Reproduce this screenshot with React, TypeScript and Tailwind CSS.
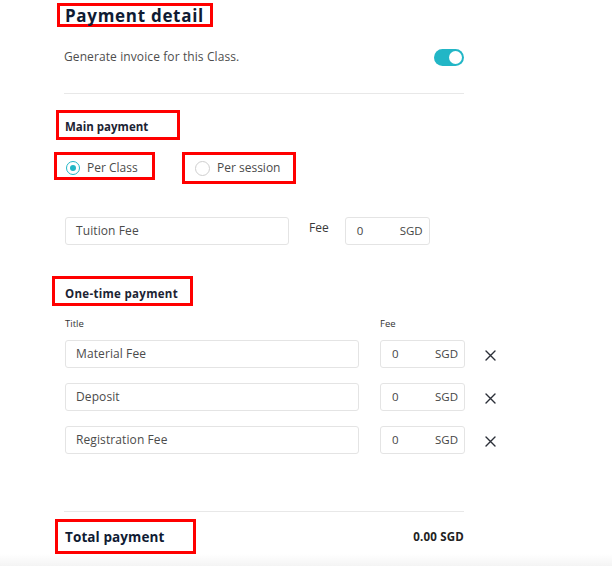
import { type FC } from "react";

// Payment detail form – one-off screen, annotated with red boxes

const RED = "border-[3px] border-[#ff0000]";

const XIcon: FC = () => (
  <svg width="11" height="11" viewBox="0 0 11 11" className="text-[#2b2f38]">
    <path d="M1 1 L10 10 M10 1 L1 10" stroke="currentColor" strokeWidth="1.4" strokeLinecap="round" />
  </svg>
);

const FeeBox: FC = () => (
  <div className="w-[85px] h-[28px] shrink-0 rounded-[3px] border border-[#e4e4e4] bg-white flex items-center justify-between pl-[11px] pr-[6px] text-[11.5px] text-[#444]">
    <span>0</span>
    <span>SGD</span>
  </div>
);

const TextBox: FC<{ value: string; w: string }> = ({ value, w }) => (
  <div className={`${w} h-[28px] shrink-0 rounded-[3px] border border-[#e4e4e4] bg-white flex items-center pl-[10px] text-[12px] text-[#4b4b4b] tracking-[0.1px]`}>
    {value}
  </div>
);

const rows = ["Material Fee", "Deposit", "Registration Fee"];

export default function App() {
  return (
    <div className="min-h-[566px] bg-white flex flex-col font-['Open_Sans',sans-serif] text-[#3c3c3c]">
      <div className="w-[400px] ml-[64px] flex flex-col">
        {/* Heading */}
        <div className={`mt-[3px] -ml-[7px] w-[156px] h-[24px] ${RED} flex items-center pl-[5px]`}>
          <h1 className="text-[17px] font-bold text-[#0f1b33] tracking-[0.7px] leading-none">Payment detail</h1>
        </div>

        {/* Invoice toggle */}
        <div className="mt-[21px] h-[18px] flex items-center justify-between">
          <span className="text-[12px] text-[#4e4e4e] tracking-[0.1px]">Generate invoice for this Class.</span>
          <div className="w-[30px] h-[17px] rounded-full bg-[#22b6c6] flex items-center justify-end pr-[2px]">
            <span className="w-[13px] h-[13px] rounded-full bg-white" />
          </div>
        </div>

        <div className="mt-[27px] h-px bg-[#e8e8e8]" />

        {/* Main payment */}
        <div className={`mt-[16px] -ml-[8px] w-[124px] h-[30px] ${RED} flex items-center pl-[6px] pt-[3px]`}>
          <h2 className="text-[11.5px] font-bold text-[#1c2333]">Main payment</h2>
        </div>

        <div className="mt-[12px] flex items-start gap-[27px] -ml-[10px]">
          <div className={`w-[101px] h-[28px] ${RED} flex items-center pl-[9px] pt-[3px] gap-[7px]`}>
            <span className="w-[14px] h-[14px] rounded-full border border-[#22b6c6] flex items-center justify-center">
              <span className="w-[6px] h-[6px] rounded-full bg-[#22b6c6]" />
            </span>
            <span className="text-[12px] text-[#4b4b4b]">Per Class</span>
          </div>
          <div className={`w-[114px] h-[32px] ${RED} flex items-center pl-[10px] gap-[7px]`}>
            <span className="w-[15px] h-[15px] rounded-full border border-[#cfcfcf]" />
            <span className="text-[12px] text-[#4b4b4b]">Per session</span>
          </div>
        </div>

        {/* Tuition */}
        <div className="mt-[33px] ml-[1px] flex items-start">
          <TextBox value="Tuition Fee" w="w-[224px]" />
          <span className="ml-[20px] mt-[2px] text-[12px] text-[#3a3a3a]">Fee</span>
          <div className="ml-[16px]">
            <FeeBox />
          </div>
        </div>

        {/* One-time payment */}
        <div className={`mt-[31px] -ml-[12px] w-[141px] h-[30px] ${RED} flex items-center pl-[10px] pt-[5px]`}>
          <h2 className="text-[11.5px] font-bold text-[#1c2333] tracking-[0.3px]">One-time payment</h2>
        </div>

        <div className="mt-[11px] ml-[1px] h-[14px] flex items-center text-[9.5px] text-[#333]">
          <span className="w-[315px]">Title</span>
          <span>Fee</span>
        </div>

        <div className="mt-[9px] ml-[1px] flex flex-col gap-[15px]">
          {rows.map((r) => (
            <div key={r} className="flex items-center">
              <TextBox value={r} w="w-[294px]" />
              <div className="ml-[21px]">
                <FeeBox />
              </div>
              <div className="ml-[20px] mt-[2px] flex">
                <XIcon />
              </div>
            </div>
          ))}
        </div>

        <div className="mt-[57px] h-px bg-[#e8e8e8]" />

        {/* Total */}
        <div className="mt-[7px] flex items-center justify-between">
          <div className={`-ml-[9px] w-[141px] h-[35px] ${RED} flex items-center pl-[7px] pt-[1px]`}>
            <h2 className="text-[13.5px] font-bold text-[#0f1b33] tracking-[0.1px]">Total payment</h2>
          </div>
          <span className="text-[11.5px] font-bold text-[#222] tracking-[0.2px]">0.00 SGD</span>
        </div>
      </div>
      <div className="mt-auto h-[12px] bg-gradient-to-b from-white to-[#f4f4f4]" />
    </div>
  );
}
